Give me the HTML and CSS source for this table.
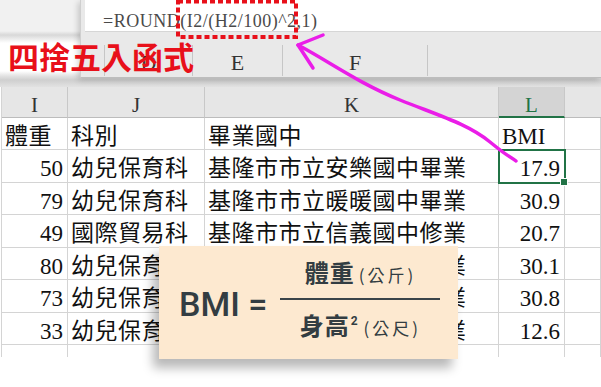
FILE: index.html
```html
<!DOCTYPE html>
<html lang="zh-Hant">
<head>
<meta charset="utf-8">
<title>BMI</title>
<link rel="stylesheet" href="styles.css">
</head>
<body>
<div class="page">
  <div class="top">
    <div class="popup">
      <div class="fx">=ROUND(I2/(H2/100)^2,1)</div>
      <div class="pcols">
        <div class="pc"></div>
        <div class="pc">D</div>
        <div class="pc">E</div>
        <div class="pc">F</div>
        <div class="pc last"></div>
      </div>
    </div>
    <div class="label">四捨五入函式</div>
  </div>

  <div class="sheet">
    <div class="h">I</div><div class="h">J</div><div class="h">K</div><div class="h on">L</div><div class="h last"></div>

    <div class="c t">體重</div><div class="c t">科別</div><div class="c t">畢業國中</div><div class="c l">BMI</div><div class="c"></div>

    <div class="c n">50</div><div class="c t">幼兒保育科</div><div class="c t">基隆市市立安樂國中畢業</div><div class="c n sel">17.9</div><div class="c"></div>

    <div class="c n">79</div><div class="c t">幼兒保育科</div><div class="c t">基隆市市立暖暖國中畢業</div><div class="c n">30.9</div><div class="c"></div>

    <div class="c n">49</div><div class="c t">國際貿易科</div><div class="c t">基隆市市立信義國中修業</div><div class="c n">20.7</div><div class="c"></div>

    <div class="c n">80</div><div class="c t">幼兒保育科</div><div class="c t">基隆市市立安樂國中畢業</div><div class="c n">30.1</div><div class="c"></div>

    <div class="c n">73</div><div class="c t">幼兒保育科</div><div class="c t">基隆市市立暖暖國中畢業</div><div class="c n">30.8</div><div class="c"></div>

    <div class="c n">33</div><div class="c t">幼兒保育科</div><div class="c t">基隆市市立安樂國中畢業</div><div class="c n">12.6</div><div class="c"></div>

    <div class="e"></div><div class="e"></div><div class="e"></div><div class="e"></div><div class="e"></div>
  </div>

  <div class="card">
    <div class="bmi">BMI =</div>
    <div class="frac">
      <div class="num">體重<span class="unit">(公斤)</span></div>
      <div class="bar"></div>
      <div class="den">身高<sup class="sq">2</sup><span class="unit">(公尺)</span></div>
    </div>
  </div>

  <svg class="ink" width="601" height="387" viewBox="0 0 601 387">
    <rect x="178" y="1.5" width="118" height="35.5" fill="none" stroke="#e8101a" stroke-width="4" stroke-dasharray="5 3"/>
    <path d="M298 45 C 330 62, 360 84, 400 100 S 468 124, 490 142 S 510 156, 516 161" fill="none" stroke="#ea1de8" stroke-width="3.5" stroke-linecap="round" stroke-linejoin="round"/>
    <path d="M323 35 L298 45 L313 68" fill="none" stroke="#ea1de8" stroke-width="3.5" stroke-linecap="round" stroke-linejoin="round"/>
  </svg>
</div>
</body>
</html>
```

FILE: styles.css
```css
* { box-sizing: border-box; }
html, body { margin: 0; padding: 0; }
body {
  width: 601px;
  height: 387px;
  overflow: hidden;
  background: #fff;
  font-family: "Liberation Serif", "Noto Sans CJK TC", serif;
}
.page {
  position: relative;
  width: 601px;
  height: 387px;
  overflow: hidden;
  background: #fff;
}

/* top area */
.top {
  position: relative;
  height: 87px;
  background: linear-gradient(to bottom,
    #f1f1f1 0, #f1f1f1 31px, #d8d8d8 35px, #ececec 39px, #fff 43px,
    #fff 71px, #e2e2e2 76px, #cfcfcf 80px, #e2e2e2 87px);
}
.popup {
  position: absolute;
  left: 80px;
  top: 0;
  right: 0;
  height: 78px;
  background: #e9e9e9;
  border-left: 1px solid #cfcfcf;
  border-bottom: 1px solid #bdbdbd;
  box-shadow: -2px 2px 6px rgba(0, 0, 0, 0.18);
}
.fx {
  margin-left: 4px;
  height: 32px;
  background: #fff;
  padding: 11px 0 0 18px;
  font-size: 18px;
  line-height: 20px;
  letter-spacing: 0.5px;
  color: #4a4a4a;
  white-space: nowrap;
  border-bottom: 1px solid #d6d6d6;
}
.pcols {
  display: grid;
  grid-template-columns: 24px 88px 90px 145px 1fr;
  height: 31px;
  margin-top: 13px;
}
.pc {
  border-right: 1px solid #c6c6c6;
  text-align: center;
  font-size: 22px;
  line-height: 24px;
  padding-top: 6px;
  color: #333;
}
.pc.last { border-right: 0; }
.label {
  position: absolute;
  left: 8px;
  top: 40px;
  font-family: "Noto Sans CJK TC", sans-serif;
  font-weight: 700;
  font-size: 31px;
  line-height: 32px;
  color: #e8101a;
  white-space: nowrap;
}

/* sheet */
.sheet {
  display: grid;
  grid-template-columns: 66px 137px 294px 66px 1fr;
  grid-template-rows: 31px 32px 33px 32px 33px 32px 33px 32px 12px;
  margin-left: 1px;
  border-left: 1px solid #d4d4d4;
}
.h {
  background: #e6e6e6;
  border-right: 1px solid #c8c8c8;
  border-bottom: 1px solid #bcbcbc;
  text-align: center;
  font-size: 21px;
  line-height: 24px;
  padding-top: 6px;
  color: #333;
}
.h.on {
  background: #d4d4d4;
  color: #217346;
  border-bottom: 2px solid #217346;
}
.h.last { border-right: 0; }
.c {
  border-right: 1px solid #d4d4d4;
  border-bottom: 1px solid #d4d4d4;
  font-size: 23px;
  line-height: 24px;
  padding: 7px 4px 0 3px;
  white-space: nowrap;
  color: #111;
}
.c.t { letter-spacing: 0.5px; }
.c.n { text-align: right; }
.c.sel {
  position: relative;
  outline: 2px solid #217346;
  outline-offset: -1px;
}
.c.sel::after {
  content: "";
  position: absolute;
  right: -4px;
  bottom: -4px;
  width: 6px;
  height: 6px;
  background: #217346;
  border: 1px solid #fff;
}
.e { border-right: 1px solid #d4d4d4; }

/* formula card */
.card {
  position: absolute;
  left: 159px;
  top: 246px;
  width: 299px;
  height: 113px;
  background: #fde9d0;
  box-shadow: -6px 9px 10px rgba(0, 0, 0, 0.28);
  display: flex;
  align-items: center;
  gap: 13px;
  padding: 0 15px 6px 20px;
  color: #333d42;
}
.bmi {
  font-family: Roboto, "Liberation Sans", sans-serif;
  font-weight: 500;
  font-size: 34px;
  white-space: nowrap;
  padding-top: 8px;
}
.frac {
  width: 160px;
  display: flex;
  flex-direction: column;
  align-items: center;
}
.num, .den {
  font-family: "Noto Sans CJK TC", sans-serif;
  font-size: 24px;
  line-height: 30px;
  font-weight: 700;
  letter-spacing: 1px;
  white-space: nowrap;
}
.num { margin-bottom: 8px; }
.den { margin-top: 10px; }
.bar {
  width: 100%;
  height: 2px;
  background: #3b4449;
}
.unit {
  font-size: 17px;
  font-weight: 400;
  letter-spacing: 3px;
  margin-left: 4px;
}
.sq {
  font-family: Roboto, "Liberation Sans", sans-serif;
  font-size: 12px;
  font-weight: 700;
  vertical-align: 10px;
  line-height: 0;
  margin-left: 1px;
  margin-right: 1px;
}

/* annotations */
.ink {
  position: absolute;
  left: 0;
  top: 0;
  pointer-events: none;
}
```
